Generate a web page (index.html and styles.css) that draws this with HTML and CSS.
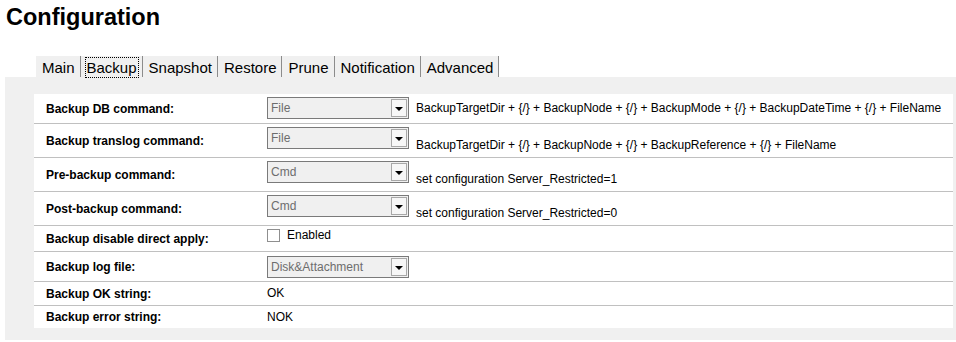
FILE: index.html
```html
<!DOCTYPE html>
<html lang="en">
<head>
    <meta charset="UTF-8">
    <title>Configuration</title>
    <link rel="stylesheet" href="styles.css">
</head>
<body>
    <h1 class="page-title">Configuration</h1>

    <div class="tabs">
        <span class="tab">Main</span>
        <span class="tab tab-active"><span class="focus">Backup</span></span>
        <span class="tab">Snapshot</span>
        <span class="tab">Restore</span>
        <span class="tab">Prune</span>
        <span class="tab">Notification</span>
        <span class="tab">Advanced</span>
    </div>

    <div class="panel">
        <div class="config">
            <div class="row row-first">
                <div class="label">Backup DB command:</div>
                <div class="value">
                    <div class="select"><span class="select-text">File</span><span class="select-btn"></span></div>
                    <span class="expr expr-center">BackupTargetDir + {/} + BackupNode + {/} + BackupMode + {/} + BackupDateTime + {/} + FileName</span>
                </div>
            </div>
            <div class="row row-cmd">
                <div class="label">Backup translog command:</div>
                <div class="value">
                    <div class="select"><span class="select-text">File</span><span class="select-btn"></span></div>
                    <span class="expr">BackupTargetDir + {/} + BackupNode + {/} + BackupReference + {/} + FileName</span>
                </div>
            </div>
            <div class="row row-cmd">
                <div class="label">Pre-backup command:</div>
                <div class="value">
                    <div class="select"><span class="select-text">Cmd</span><span class="select-btn"></span></div>
                    <span class="expr">set configuration Server_Restricted=1</span>
                </div>
            </div>
            <div class="row row-cmd">
                <div class="label">Post-backup command:</div>
                <div class="value">
                    <div class="select"><span class="select-text">Cmd</span><span class="select-btn"></span></div>
                    <span class="expr">set configuration Server_Restricted=0</span>
                </div>
            </div>
            <div class="row row-check">
                <div class="label">Backup disable direct apply:</div>
                <div class="value">
                    <span class="checkbox"></span>
                    <span class="check-label">Enabled</span>
                </div>
            </div>
            <div class="row row-log">
                <div class="label">Backup log file:</div>
                <div class="value">
                    <div class="select"><span class="select-text">Disk&amp;Attachment</span><span class="select-btn"></span></div>
                </div>
            </div>
            <div class="row row-text">
                <div class="label">Backup OK string:</div>
                <div class="value">OK</div>
            </div>
            <div class="row row-text row-last">
                <div class="label">Backup error string:</div>
                <div class="value">NOK</div>
            </div>
        </div>
    </div>
</body>
</html>
```

FILE: styles.css
```css
body {
    margin: 0;
    font-family: "Liberation Sans", Arial, sans-serif;
    background-color: #fff;
    color: #000;
}
.page-title {
    font-size: 23.5px;
    font-weight: bold;
    line-height: 27px;
    margin: 4px 0 0 6px;
}

/* onglets */
.tabs {
    display: flex;
    margin: 25px 0 0 36px;
}
.tab {
    font-size: 15px;
    line-height: 18px;
    padding: 3px 5px 0 6px;
    background-color: #f0f0f0;
    border-right: 1px solid #8c8c8c;
}
.tab-active .focus {
    outline: 1px dotted #000;
    outline-offset: 1px;
}

/* panneau */
.panel {
    margin-left: 5px;
    background-color: #f0f0f0;
    padding: 17px 3px 12px 29px;
}
.config {
    background-color: #fff;
}
.row {
    display: grid;
    grid-template-columns: 233px 1fr;
    border-bottom: 1px solid #c0c0c0;
    font-size: 12px;
    line-height: 14px;
}
.row-last {
    border-bottom: none;
}
.label {
    font-weight: bold;
    padding-left: 12px;
    align-self: center;
}
.value {
    display: flex;
    align-items: flex-start;
}
.row-first .value {
    padding: 3px 0 4px;
    align-items: center;
}
.row-cmd .value {
    padding: 3px 0 5px;
}
.expr {
    margin-left: 7px;
}
.row-cmd .expr {
    margin-top: 11px;
}
.row-check .value {
    padding: 2px 0 9px;
    align-items: center;
}
.row-log .value {
    padding: 4px 0 3px;
}
.row-text .value {
    padding: 4px 0 5px;
}
.row-last .value {
    padding-bottom: 4px;
}

/* liste déroulante */
.select {
    display: flex;
    box-sizing: border-box;
    width: 142px;
    height: 22px;
    border: 1px solid #7a7a7a;
    background-color: #f0f0f0;
}
.select-text {
    flex: 1;
    color: #6d6d6d;
    padding-left: 3px;
    line-height: 20px;
}
.select-btn {
    display: flex;
    justify-content: center;
    align-items: center;
    box-sizing: border-box;
    width: 16px;
    margin: 1px;
    border: 1px solid #a8a8a8;
    background-color: #f7f7f7;
}
.select-btn::after {
    content: '';
    border-left: 4px solid transparent;
    border-right: 4px solid transparent;
    border-top: 4px solid #000;
    margin-top: 1px;
}

/* case à cocher */
.checkbox {
    box-sizing: border-box;
    width: 13px;
    height: 13px;
    border: 1px solid #8f8f8f;
    background-color: #fff;
}
.check-label {
    margin-left: 7px;
}
```
